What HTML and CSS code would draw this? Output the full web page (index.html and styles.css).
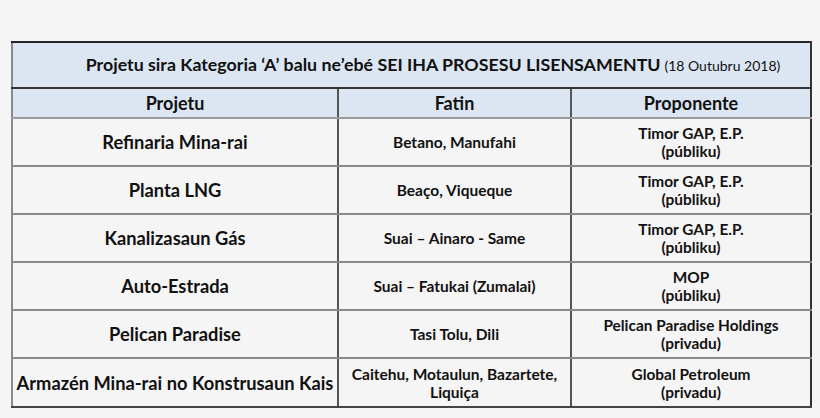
FILE: index.html
```html
<!DOCTYPE html>
<html>
<head>
<meta charset="utf-8">
<link rel="stylesheet" href="styles.css">
</head>
<body>
<div class="page">
<table class="tbl">
  <colgroup>
    <col class="c1"><col class="c2"><col class="c3">
  </colgroup>
  <tr class="title-row">
    <td colspan="3" class="title"><span class="t-main">Projetu sira Kategoria ‘A’ balu ne’ebé SEI IHA PROSESU LISENSAMENTU</span> <span class="t-date">(18 Outubru 2018)</span></td>
  </tr>
  <tr class="head-row">
    <th>Projetu</th><th>Fatin</th><th>Proponente</th>
  </tr>
  <tr>
    <td class="proj">Refinaria Mina-rai</td><td class="loc">Betano, Manufahi</td><td class="prop">Timor GAP, E.P.<br>(públiku)</td>
  </tr>
  <tr>
    <td class="proj">Planta LNG</td><td class="loc">Beaço, Viqueque</td><td class="prop">Timor GAP, E.P.<br>(públiku)</td>
  </tr>
  <tr>
    <td class="proj">Kanalizasaun Gás</td><td class="loc">Suai – Ainaro - Same</td><td class="prop">Timor GAP, E.P.<br>(públiku)</td>
  </tr>
  <tr>
    <td class="proj">Auto-Estrada</td><td class="loc">Suai – Fatukai (Zumalai)</td><td class="prop">MOP<br>(públiku)</td>
  </tr>
  <tr>
    <td class="proj">Pelican Paradise</td><td class="loc">Tasi Tolu, Dili</td><td class="prop">Pelican Paradise Holdings<br>(privadu)</td>
  </tr>
  <tr class="last">
    <td class="proj">Armazén Mina-rai no Konstrusaun Kais</td><td class="loc">Caitehu, Motaulun, Bazartete,<br>Liquiça</td><td class="prop">Global Petroleum<br>(privadu)</td>
  </tr>
</table>
</div>
</body>
</html>
```
FILE: styles.css
```css
html, body {
  margin: 0;
  padding: 0;
  background: #f5f5f5;
}
body {
  width: 820px;
  height: 418px;
  overflow: hidden;
  font-family: Lato, "Open Sans", sans-serif;
  color: #111;
}
.page {
  padding: 41px 0 0 11px;
}
.tbl {
  border-collapse: collapse;
  width: 799px;
  table-layout: fixed;
}
.c1 { width: 326px; }
.c2 { width: 233px; }
.c3 { width: 240px; }
.tbl td, .tbl th {
  border-left: 2px solid #555;
  border-right: 2px solid #555;
  border-bottom: 2px solid #8a8a8a;
  text-align: center;
  vertical-align: middle;
  padding: 0 1px;
  font-weight: bold;
  height: 46px;
  line-height: 18px;
  white-space: nowrap;
}
.tbl td:first-child { border-left-color: #8a8a8a; }
.title-row td {
  background: #dce6f2;
  border-top: 2px solid #222;
  border-bottom: 2px solid #333;
  border-left-color: #8a8a8a;
  border-right-color: #333;
  height: 44px;
  padding-left: 44px;
}
.t-main { font-size: 17.8px; }
.t-date { font-size: 14px; font-weight: normal; }
.head-row th {
  background: #dce6f2;
  height: 28px;
  font-size: 18px;
  border-bottom: 2px solid #9a9a9a;
}
.head-row th:first-child { border-left-color: #8a8a8a; }
.head-row th:last-child, .tbl td:last-child { border-right-color: #333; }
.proj { font-size: 18.3px; }
.loc { font-size: 15.5px; }
.prop { font-size: 15.4px; }
.last td { border-bottom: 2px solid #444; height: 47px; }
```
